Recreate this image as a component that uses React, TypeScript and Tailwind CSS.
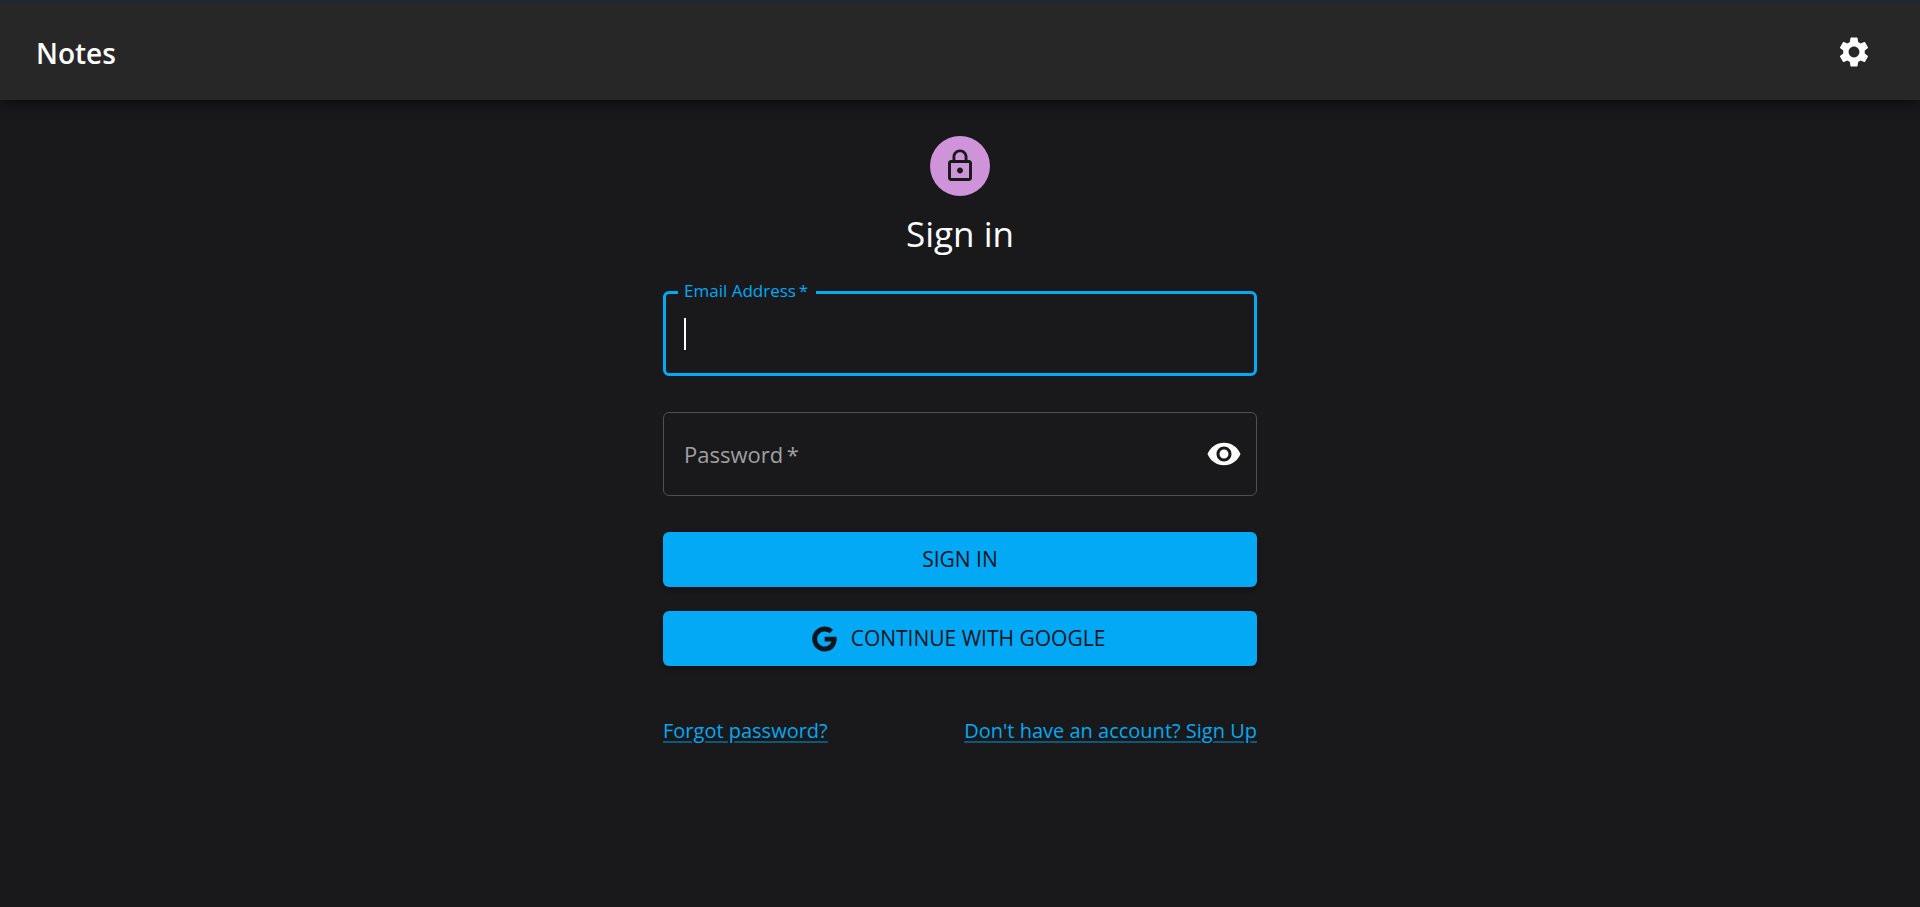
import { useState } from "react";
import { MdLockOutline, MdSettings, MdVisibility, MdVisibilityOff } from "react-icons/md";

function GoogleIcon() {
  return (
    <svg viewBox="0 0 24 24" className="-ml-1.5 size-[30px]" fill="currentColor" aria-hidden="true">
      <path d="M12.545,10.239v3.821h5.445c-0.712,2.315-2.647,3.972-5.445,3.972c-3.332,0-6.033-2.701-6.033-6.032s2.701-6.032,6.033-6.032c1.498,0,2.866,0.549,3.921,1.453l2.814-2.814C17.503,2.988,15.139,2,12.545,2C7.021,2,2.543,6.477,2.543,12s4.478,10,10.002,10c8.396,0,10.249-7.85,9.426-11.748L12.545,10.239z" />
    </svg>
  );
}

const buttonClass =
  "flex w-full items-center justify-center gap-3 rounded-md bg-[#03a9f4] px-6 text-[21px] leading-[55px] font-medium text-[#08151c] uppercase shadow-[0_3px_5px_rgba(0,0,0,0.3)] hover:bg-[#0398db]";
const linkClass =
  "text-xl leading-[30px] text-[#03a9f4] underline decoration-[#0b5878] decoration-2 underline-offset-3";

export default function App() {
  const [email, setEmail] = useState("");
  const [emailFocused, setEmailFocused] = useState(true);
  const [visible, setVisible] = useState(false);

  return (
    <div className="min-h-screen bg-[#19191b] font-['Open_Sans','Noto_Sans',sans-serif] text-white">
      <header className="relative flex h-[100px] items-center justify-between border-t-4 border-[#232530] bg-[#272727] px-9 shadow-[0_3px_12px_rgba(0,0,0,0.6)]">
        <h1 className="pt-0.5 text-[28px] font-semibold">Notes</h1>
        <button type="button" aria-label="Settings" className="rounded-full p-3">
          <MdSettings className="size-9" />
        </button>
      </header>

      <main className="mx-auto w-full max-w-[666px] px-9 pt-9">
        <div className="flex flex-col items-center">
          <div className="flex size-[60px] items-center justify-center rounded-full bg-[#ce93d8] text-[#19191b]">
            <MdLockOutline className="size-9" />
          </div>
          <h2 className="mt-[14px] text-[35px] leading-[48px]">Sign in</h2>
        </div>

        <form className="mt-[33px]" onSubmit={(e) => e.preventDefault()}>
          <div className="relative">
            <input
              id="email"
              type="email"
              autoFocus
              required
              autoComplete="email"
              value={email}
              onChange={(e) => setEmail(e.target.value)}
              onFocus={() => setEmailFocused(true)}
              onBlur={() => setEmailFocused(false)}
              className="block h-[85px] w-full rounded-md border-3 border-[#03a9f4] bg-transparent px-[18px] text-[22px] caret-white outline-none placeholder-shown:caret-transparent"
              placeholder=" "
            />
            {emailFocused && email === "" && (
              <span
                aria-hidden="true"
                className="pointer-events-none absolute top-[27px] left-[21px] h-8 w-0.5 bg-white"
              />
            )}
            <label
              htmlFor="email"
              className="absolute -top-3 left-[15px] bg-[#19191b] pr-2 pl-1.5 text-[17px] leading-6 text-[#03a9f4]"
            >
              Email Address{"\u2009"}*
            </label>
          </div>

          <div className="relative mt-9 flex h-[84px] items-center rounded-md border border-[#505052] pr-[14px] pl-5">
            <input
              id="password"
              type={visible ? "text" : "password"}
              required
              placeholder=" "
              className="peer min-w-0 flex-1 self-stretch bg-transparent text-[22px] outline-none"
            />
            <label
              htmlFor="password"
              className="pointer-events-none absolute left-5 text-[22px] text-[#a0a0a1] peer-focus:hidden peer-[:not(:placeholder-shown)]:hidden"
            >
              Password{"\u2009"}*
            </label>
            <button
              type="button"
              aria-label="Toggle password visibility"
              onClick={() => setVisible(!visible)}
            >
              {visible ? <MdVisibilityOff className="size-9" /> : <MdVisibility className="size-9" />}
            </button>
          </div>

          <div className="mt-9 flex flex-col gap-6">
            <button type="submit" className={buttonClass}>
              Sign in
            </button>
            <button type="button" className={buttonClass}>
              <GoogleIcon />
              Continue with Google
            </button>
          </div>
        </form>

        <div className="mt-[50px] flex flex-wrap justify-between gap-x-6">
          <a href="#forgot" className={linkClass}>
            Forgot password?
          </a>
          <a href="#signup" className={linkClass}>
            Don't have an account? Sign Up
          </a>
        </div>
      </main>
    </div>
  );
}
